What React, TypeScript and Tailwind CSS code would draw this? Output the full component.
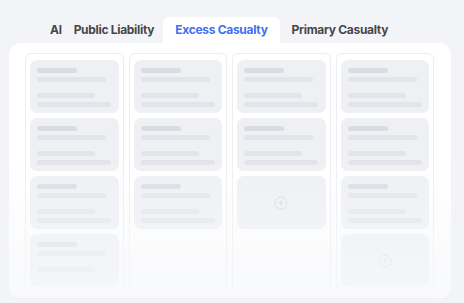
import React from "react";

function Card() {
  return (
    <div className="h-[53px] rounded-[7px] bg-[#eff0f4] pl-[7px] pt-[8px]">
      <div className="h-[5px] w-[40px] rounded-full bg-[#d9dce3]" />
      <div className="mt-[4px] h-[5px] w-[69px] rounded-full bg-[#e2e4ea]" />
      <div className="mt-[11px] h-[5px] w-[58px] rounded-full bg-[#e2e4ea]" />
      <div className="mt-[4px] h-[5px] w-[74px] rounded-full bg-[#e2e4ea]" />
    </div>
  );
}

function Card3() {
  return (
    <div className="h-[53px] rounded-[7px] bg-[#eff0f4] pl-[7px] pt-[8px]">
      <div className="h-[5px] w-[40px] rounded-full bg-[#d9dce3]" />
      <div className="mt-[4px] h-[5px] w-[69px] rounded-full bg-[#e2e4ea]" />
      <div className="mt-[11px] h-[5px] w-[58px] rounded-full bg-[#e2e4ea]" />
    </div>
  );
}

function AddCard() {
  return (
    <div className="flex h-[53px] items-center justify-center rounded-[7px] bg-[#eff0f4]">
      <svg width="14" height="14" viewBox="0 0 14 14" fill="none">
        <circle cx="7" cy="7" r="6" stroke="#d3d6dc" strokeWidth="1" />
        <path d="M7 4v6M4 7h6" stroke="#d3d6dc" strokeWidth="1" />
      </svg>
    </div>
  );
}

function Column({ children }: { children: React.ReactNode }) {
  return (
    <div className="flex flex-col gap-[5px] rounded-[6px] border border-[#eceef1] px-[4px] pt-[6px]">
      {children}
    </div>
  );
}

export default function App() {
  return (
    <div
      className="h-[303px] w-[464px] overflow-hidden bg-[#f3f4f8]"
      style={{ fontFamily: "Inter, 'Noto Sans', sans-serif" }}
    >
      <div className="flex h-[43px] items-end pl-[50px] text-[12px] font-bold tracking-[-0.3px] text-[#474747]">
        <div className="flex h-[26px] items-center pb-[1px]">Al</div>
        <div className="ml-[12px] flex h-[26px] items-center pb-[1px]">Public Liability</div>
        <div className="ml-[9px] flex h-[26px] items-center rounded-t-[6px] bg-white px-[12px] pb-[1px] text-[#3f6ff2]">
          Excess Casualty
        </div>
        <div className="ml-[12px] flex h-[26px] items-center pb-[1px]">Primary Casualty</div>
      </div>
      <div className="relative ml-[9px] h-[255px] w-[442px] rounded-[12px] bg-white pl-[16px] pr-[17px] pt-[10px]">
        <div className="grid h-[239px] grid-cols-4 gap-[5px]">
          <Column>
            <Card />
            <Card />
            <Card />
            <Card3 />
          </Column>
          <Column>
            <Card />
            <Card />
            <Card />
          </Column>
          <Column>
            <Card />
            <Card />
            <AddCard />
          </Column>
          <Column>
            <Card />
            <Card />
            <Card />
            <AddCard />
          </Column>
        </div>
        <div className="pointer-events-none absolute inset-x-0 bottom-0 h-[140px] rounded-b-[12px] bg-gradient-to-b from-[rgba(248,249,251,0)] to-[rgba(247,248,250,0.8)]" />
      </div>
    </div>
  );
}
